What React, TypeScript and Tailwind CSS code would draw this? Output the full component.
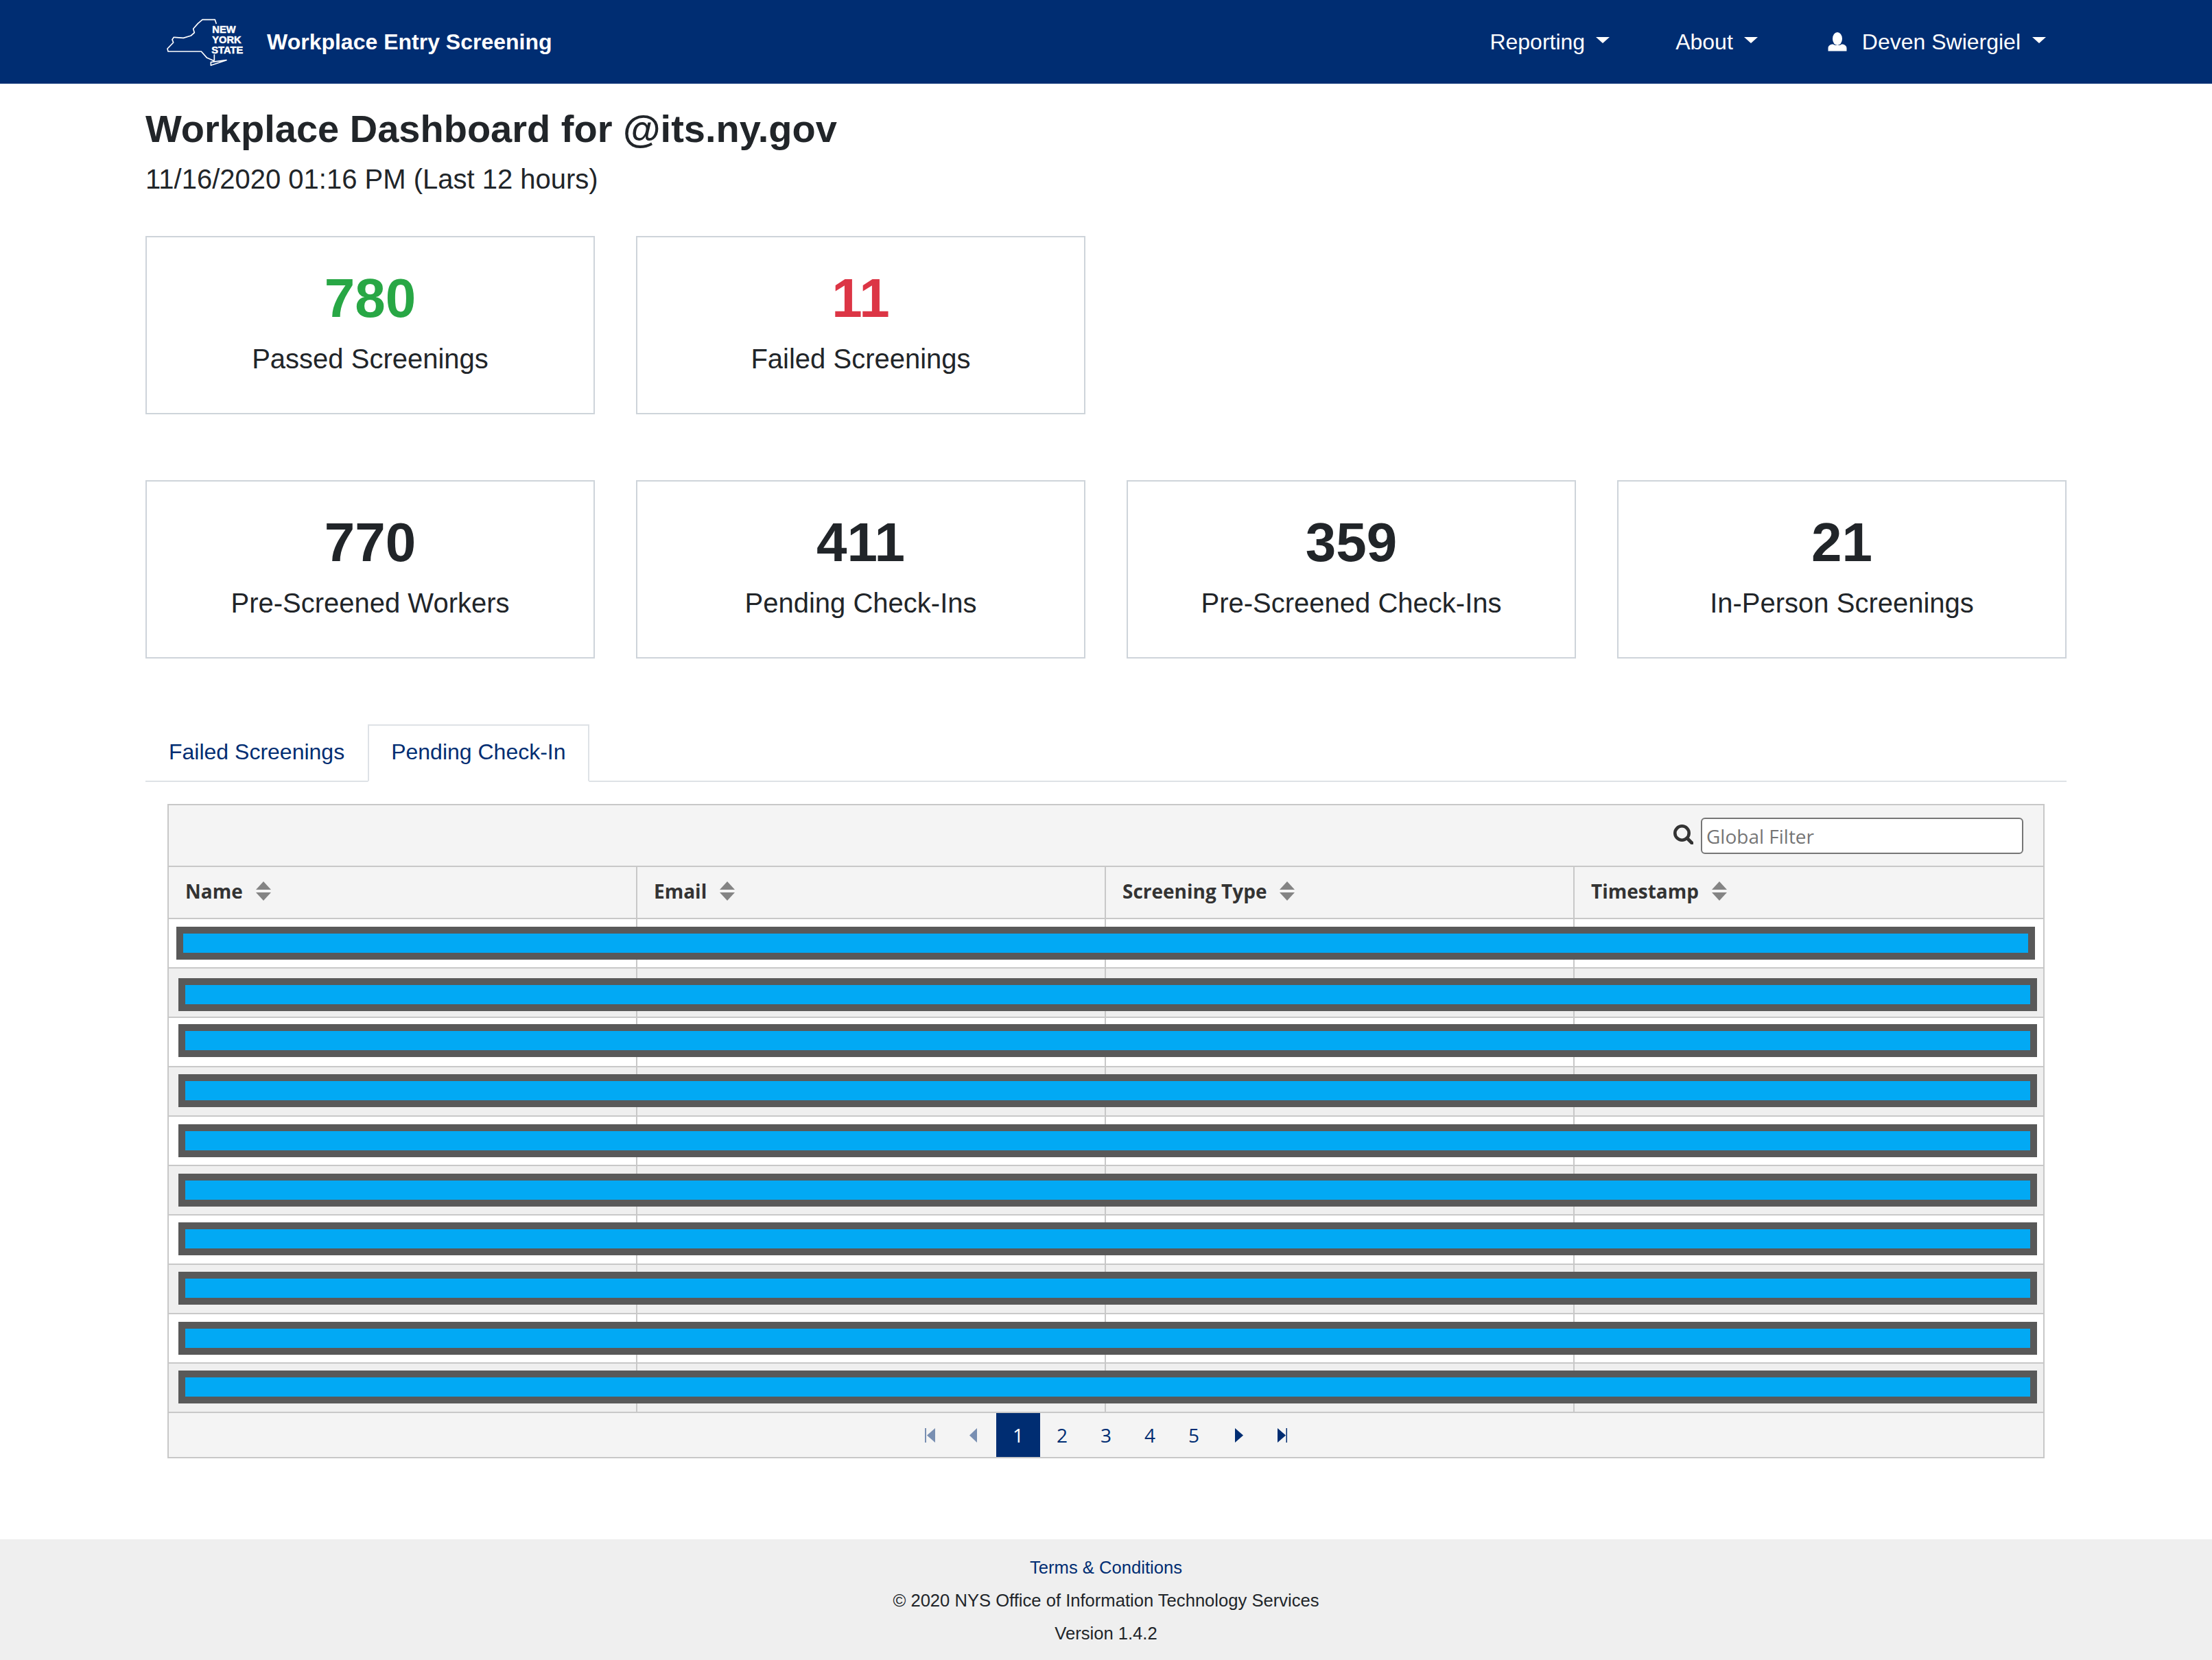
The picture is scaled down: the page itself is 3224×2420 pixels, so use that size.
import { useState } from "react";

const navy = "text-[#002d72]";

const topStats = [
  { value: "780", label: "Passed Screenings", color: "text-[#28a745]" },
  { value: "11", label: "Failed Screenings", color: "text-[#dc3545]" },
];

const bottomStats = [
  { value: "770", label: "Pre-Screened Workers", color: "text-[#212529]" },
  { value: "411", label: "Pending Check-Ins", color: "text-[#212529]" },
  { value: "359", label: "Pre-Screened Check-Ins", color: "text-[#212529]" },
  { value: "21", label: "In-Person Screenings", color: "text-[#212529]" },
];

const columns = ["Name", "Email", "Screening Type", "Timestamp"];

// the black-out boxes were drawn by hand, so none of them sit quite the same
const rows = [
  "top-[11px] left-[11px] right-[12px]",
  "top-[14px] left-[14px] right-[9px]",
  "top-[9px] left-[14px] right-[9px]",
  "top-[10px] left-[14px] right-[9px]",
  "top-[11px] left-[14px] right-[9px]",
  "top-[11px] left-[14px] right-[9px]",
  "top-[10px] left-[14px] right-[9px]",
  "top-[10px] left-[14px] right-[9px]",
  "top-[11px] left-[14px] right-[9px]",
  "top-[10px] left-[14px] right-[9px]",
];

function Logo() {
  return (
    <svg viewBox="0 0 420 270" className="w-[140px] h-[90px] shrink-0 text-white">
      <path
        d="M256 56 L250 38 L195 38 L175 55 L155 78 L160 95 L145 108 L112 118 L70 115 L63 125 L68 138 L42 165 L45 177 L190 177 L215 205 L246 218 M247 190 L247 218 M232 224 L300 215 L232 238 Z"
        fill="none"
        stroke="currentColor"
        strokeWidth="5"
        strokeLinejoin="round"
      />
      <g
        fill="currentColor"
        stroke="currentColor"
        strokeWidth="1.5"
        fontWeight="700"
        fontSize="44"
        fontFamily="'Liberation Sans', sans-serif"
      >
        <text x="238" y="96">NEW</text>
        <text x="238" y="140">YORK</text>
        <text x="235" y="185">STATE</text>
      </g>
    </svg>
  );
}

function Caret() {
  return <span className="mb-[5px] w-0 h-0 border-x-[10px] border-t-[9px] border-x-transparent border-t-white" />;
}

function UserIcon() {
  return (
    <svg viewBox="0 0 28 28" className="w-[28px] h-[28px] fill-white">
      <ellipse cx="14" cy="9.5" rx="7" ry="9.5" />
      <path d="M0.5 27.5 V23 C0.5 19.5 4 17.5 8 17.5 C10 19.5 18 19.5 20 17.5 C24 17.5 27.5 19.5 27.5 23 V27.5 Z" />
    </svg>
  );
}

function StatCard({ value, label, color }: { value: string; label: string; color: string }) {
  return (
    <div className="h-[260px] border-2 border-[#ced4da] pt-[41px] text-center">
      <div className={`text-[80px] leading-[96px] font-bold ${color}`}>{value}</div>
      <div className="mt-[10px] text-[40px] leading-[60px] text-[#212529]">{label}</div>
    </div>
  );
}

function SortIcon() {
  return (
    <svg viewBox="0 0 22 28" className="w-[22px] h-[28px] fill-[#848484]">
      <path d="M11 0 L22 12 H0 Z" />
      <path d="M0 16 H22 L11 28 Z" />
    </svg>
  );
}

function SearchIcon() {
  return (
    <svg viewBox="0 0 29 29" className="mb-[4px] w-[29px] h-[29px] fill-none stroke-[#333333]">
      <circle cx="12.5" cy="12.5" r="10.2" strokeWidth="4.6" />
      <path d="M20 20 L27 27" strokeWidth="5" strokeLinecap="round" />
    </svg>
  );
}

function PageArrow({ kind }: { kind: "first" | "prev" | "next" | "last" }) {
  const disabled = kind === "first" || kind === "prev";
  return (
    <button className={`w-[64px] h-full flex items-center justify-center ${disabled ? "opacity-50" : ""}`}>
      <svg viewBox="0 0 16 21" className="w-[16px] h-[21px] fill-[#002d72]">
        {kind === "first" && <path d="M-1 0 H2 V21 H-1 Z M15 0 V21 L3 10.5 Z" />}
        {kind === "prev" && <path d="M12 0 V21 L1 10.5 Z" />}
        {kind === "next" && <path d="M4 0 V21 L16 10.5 Z" />}
        {kind === "last" && <path d="M2 0 V21 L14 10.5 Z M14.5 0 H18 V21 H14.5 Z" />}
      </svg>
    </button>
  );
}

export default function App() {
  const [tab, setTab] = useState("pending");

  return (
    <div className="min-h-[2420px] bg-white font-['Liberation_Sans',Arial,sans-serif] text-[32px] leading-[48px] text-[#212529]">
      <nav className="h-[122px] bg-[#002d72] flex items-center pl-[230px] pr-[242px] text-white">
        <Logo />
        <span className="ml-[19px] font-bold">Workplace Entry Screening</span>
        <div className="ml-auto flex items-center">
          <a className="flex items-center gap-[16px]">
            Reporting <Caret />
          </a>
          <a className="ml-[96px] flex items-center gap-[16px]">
            About <Caret />
          </a>
          <a className="ml-[102px] flex items-center">
            <UserIcon />
            <span className="ml-[22px] mr-[17px]">Deven Swiergiel</span>
            <Caret />
          </a>
        </div>
      </nav>

      <main className="px-[212px] pt-[32px] pb-[118px]">
        <h3 className="text-[56px] leading-[67px] font-bold">Workplace Dashboard for @its.ny.gov</h3>
        <p className="mt-[10px] text-[40px] leading-[60px]">11/16/2020 01:16 PM (Last 12 hours)</p>

        <div className="mt-[53px] grid grid-cols-4 gap-x-[60px]">
          {topStats.map((s) => (
            <StatCard key={s.label} {...s} />
          ))}
        </div>
        <div className="mt-[96px] grid grid-cols-4 gap-x-[60px]">
          {bottomStats.map((s) => (
            <StatCard key={s.label} {...s} />
          ))}
        </div>

        <div className="mt-[96px] flex h-[84px] border-b-2 border-[#dee2e6]">
          <button
            onClick={() => setTab("failed")}
            className={`h-[84px] px-[34px] pb-[4px] ${navy}`}
          >
            Failed Screenings
          </button>
          <button
            onClick={() => setTab("pending")}
            className={`h-[84px] px-[32px] pb-[4px] border-2 bg-white ${navy} ${
              tab === "pending" ? "border-[#dee2e6] border-b-white" : "border-transparent"
            }`}
          >
            Pending Check-In
          </button>
        </div>

        <div className="mt-[32px] mx-[32px] border-2 border-[#c8c8c8] font-['Open_Sans',sans-serif] text-[28px] leading-[40px]">
          <div className="h-[90px] bg-[#f4f4f4] border-b-2 border-[#c8c8c8] flex items-center justify-end pr-[29px]">
            <SearchIcon />
            <input
              placeholder="Global Filter"
              className="ml-[11px] w-[470px] h-[53px] bg-white border-2 border-[#767676] rounded-[6px] px-[6px] pt-[2px] text-[28px] placeholder:text-[#757575] outline-none"
            />
          </div>

          <div className="grid grid-cols-4 h-[76px] bg-[#f4f4f4] border-b-2 border-[#c8c8c8]">
            {columns.map((c, i) => (
              <div
                key={c}
                className={`flex items-center gap-[19px] pl-[24px] pb-[4px] font-bold text-[#333333] ${
                  i < 3 ? "border-r-2 border-[#c8c8c8]" : ""
                }`}
              >
                {c}
                <SortIcon />
              </div>
            ))}
          </div>

          {rows.map((box, i) => (
            <div
              key={i}
              className={`relative grid grid-cols-4 h-[72px] border-b-2 border-[#c8c8c8] ${
                i % 2 === 1 ? "bg-[#efefef]" : "bg-white"
              }`}
            >
              <div className="border-r-2 border-[#c8c8c8]" />
              <div className="border-r-2 border-[#c8c8c8]" />
              <div className="border-r-2 border-[#c8c8c8]" />
              <div />
              <div className={`absolute h-[48px] border-[10px] border-[#595959] bg-[#02a9f4] ${box}`} />
            </div>
          ))}

          <div className="h-[64px] bg-[#f4f4f4] flex justify-center items-stretch text-[#002d72]">
            <PageArrow kind="first" />
            <PageArrow kind="prev" />
            {[1, 2, 3, 4, 5].map((n) => (
              <button
                key={n}
                className={`w-[64px] h-full ${n === 1 ? "bg-[#002d72] text-white" : ""}`}
              >
                {n}
              </button>
            ))}
            <PageArrow kind="next" />
            <PageArrow kind="last" />
          </div>
        </div>
      </main>

      <footer className="h-[176px] bg-[#efefef] pt-[17px] text-center text-[25.6px] leading-[48px]">
        <a className={`block ${navy}`}>Terms &amp; Conditions</a>
        <div>© 2020 NYS Office of Information Technology Services</div>
        <div>Version 1.4.2</div>
      </footer>
    </div>
  );
}
